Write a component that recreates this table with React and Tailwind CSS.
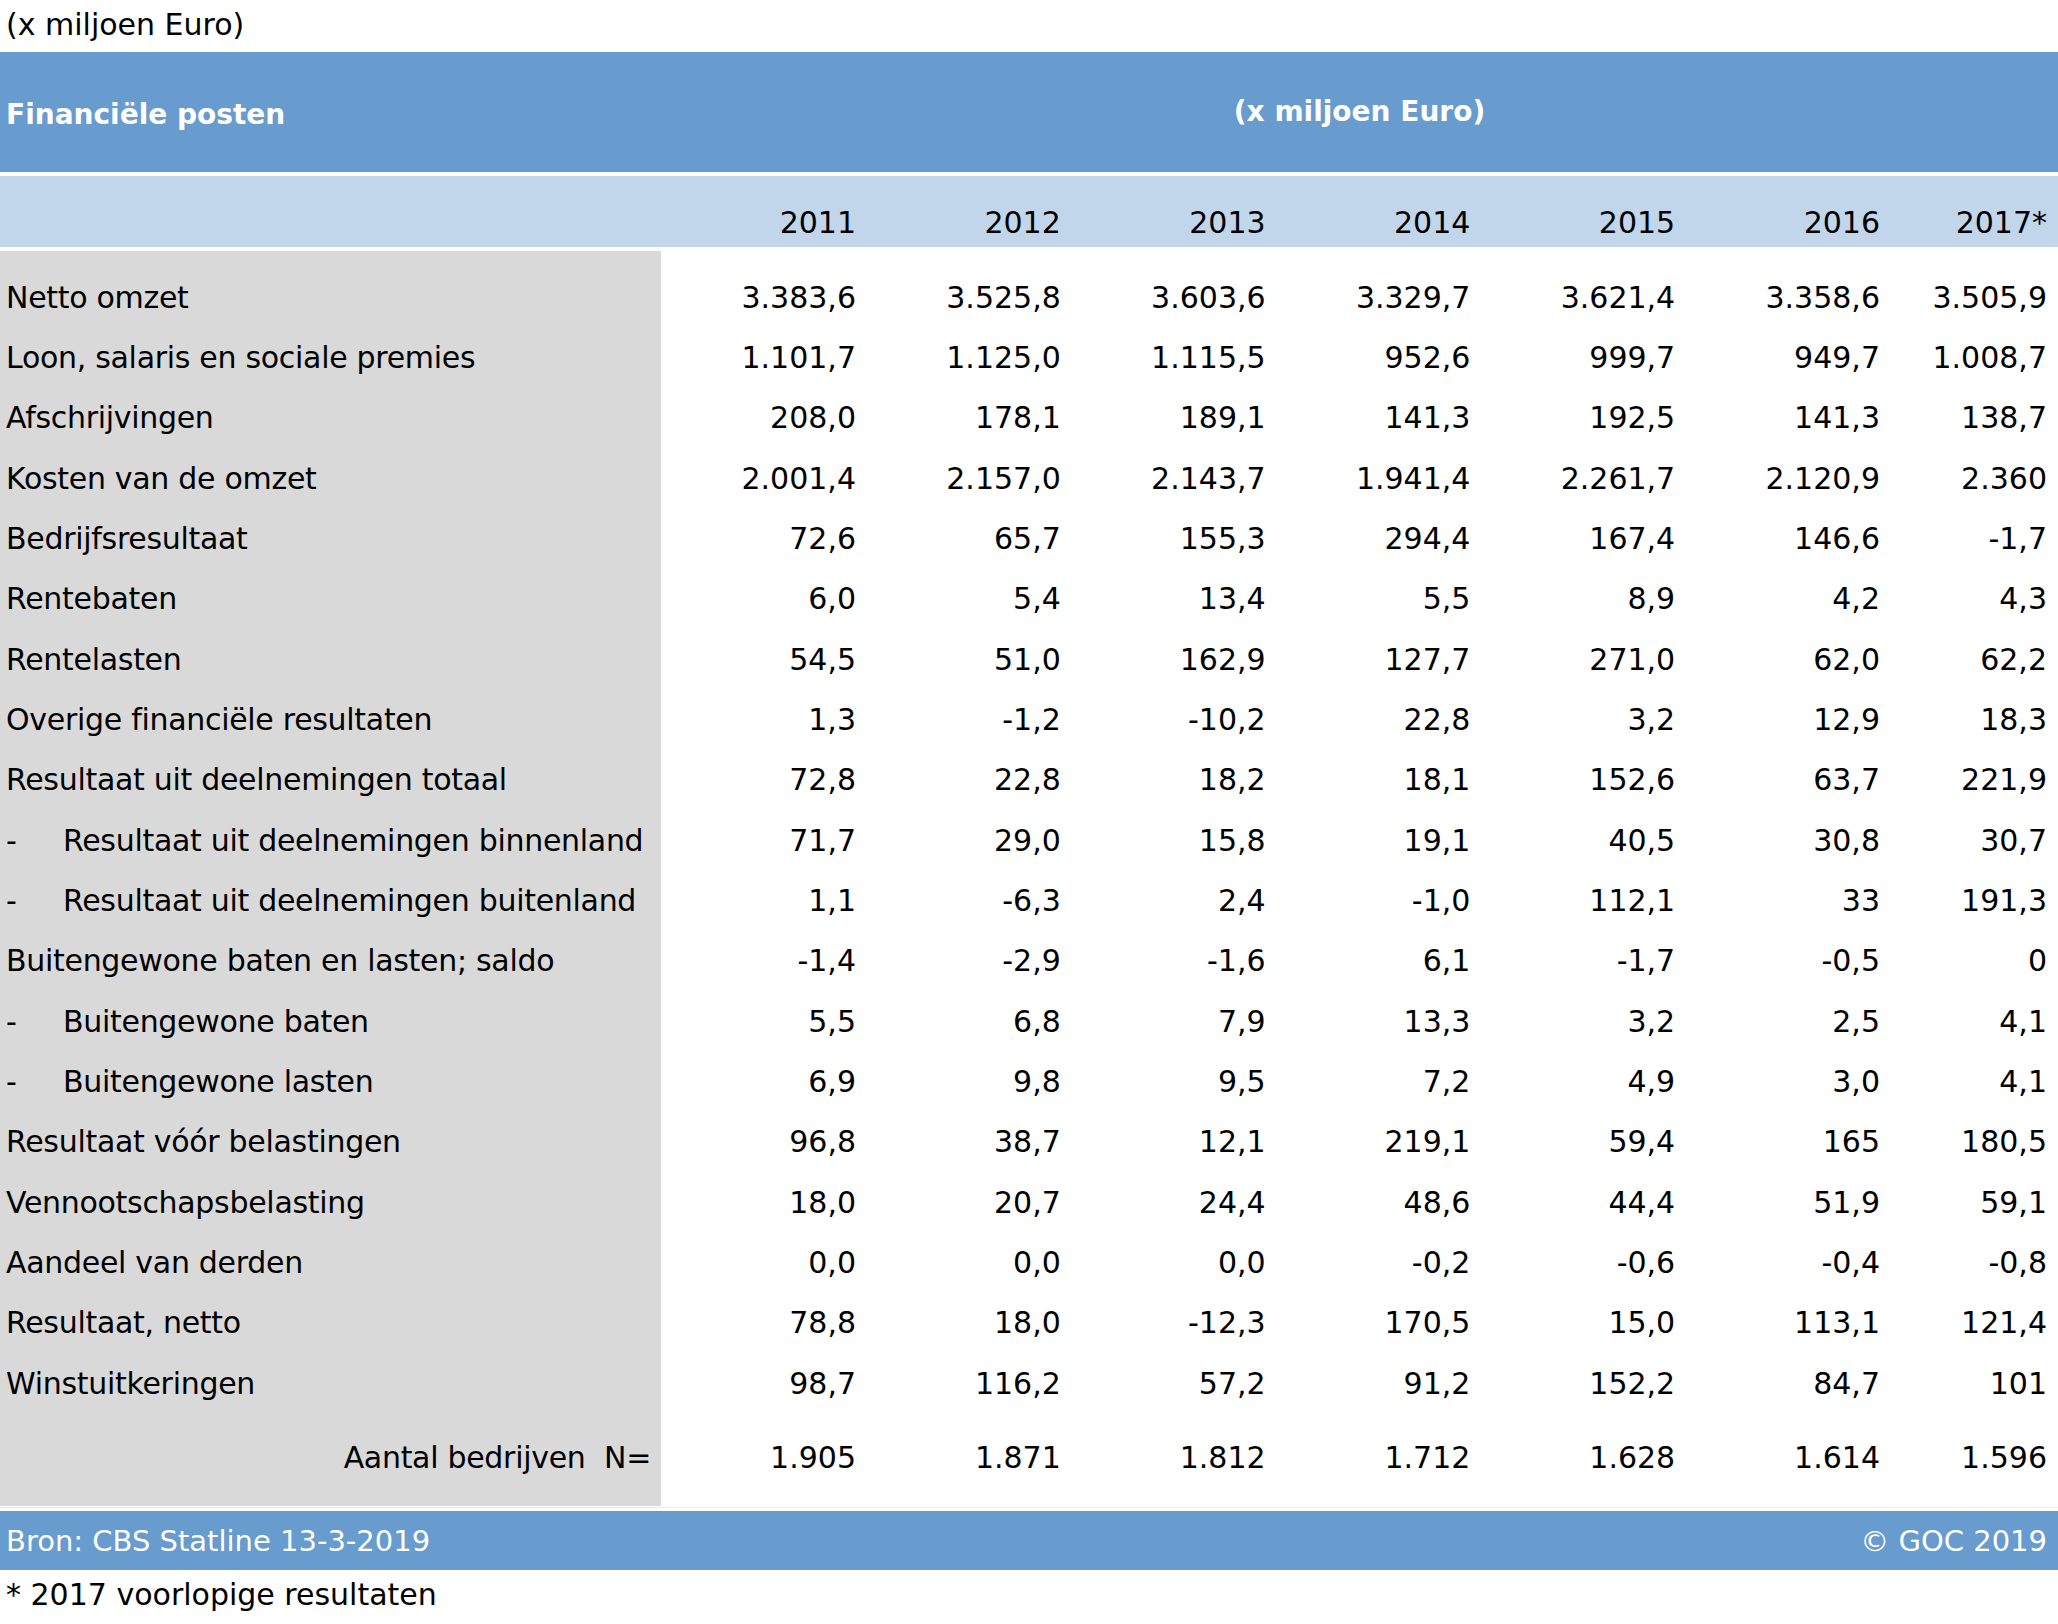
import React from "react";

const years = ["2011", "2012", "2013", "2014", "2015", "2016", "2017*"];

const rows = [
    { label: "Netto omzet", values: ["3.383,6", "3.525,8", "3.603,6", "3.329,7", "3.621,4", "3.358,6", "3.505,9"] },
    { label: "Loon, salaris en sociale premies", values: ["1.101,7", "1.125,0", "1.115,5", "952,6", "999,7", "949,7", "1.008,7"] },
    { label: "Afschrijvingen", values: ["208,0", "178,1", "189,1", "141,3", "192,5", "141,3", "138,7"] },
    { label: "Kosten van de omzet", values: ["2.001,4", "2.157,0", "2.143,7", "1.941,4", "2.261,7", "2.120,9", "2.360"] },
    { label: "Bedrijfsresultaat", values: ["72,6", "65,7", "155,3", "294,4", "167,4", "146,6", "-1,7"] },
    { label: "Rentebaten", values: ["6,0", "5,4", "13,4", "5,5", "8,9", "4,2", "4,3"] },
    { label: "Rentelasten", values: ["54,5", "51,0", "162,9", "127,7", "271,0", "62,0", "62,2"] },
    { label: "Overige financiële resultaten", values: ["1,3", "-1,2", "-10,2", "22,8", "3,2", "12,9", "18,3"] },
    { label: "Resultaat uit deelnemingen totaal", values: ["72,8", "22,8", "18,2", "18,1", "152,6", "63,7", "221,9"] },
    { label: "Resultaat uit deelnemingen binnenland", sub: true, values: ["71,7", "29,0", "15,8", "19,1", "40,5", "30,8", "30,7"] },
    { label: "Resultaat uit deelnemingen buitenland", sub: true, values: ["1,1", "-6,3", "2,4", "-1,0", "112,1", "33", "191,3"] },
    { label: "Buitengewone baten en lasten; saldo", values: ["-1,4", "-2,9", "-1,6", "6,1", "-1,7", "-0,5", "0"] },
    { label: "Buitengewone baten", sub: true, values: ["5,5", "6,8", "7,9", "13,3", "3,2", "2,5", "4,1"] },
    { label: "Buitengewone lasten", sub: true, values: ["6,9", "9,8", "9,5", "7,2", "4,9", "3,0", "4,1"] },
    { label: "Resultaat vóór belastingen", values: ["96,8", "38,7", "12,1", "219,1", "59,4", "165", "180,5"] },
    { label: "Vennootschapsbelasting", values: ["18,0", "20,7", "24,4", "48,6", "44,4", "51,9", "59,1"] },
    { label: "Aandeel van derden", values: ["0,0", "0,0", "0,0", "-0,2", "-0,6", "-0,4", "-0,8"] },
    { label: "Resultaat, netto", values: ["78,8", "18,0", "-12,3", "170,5", "15,0", "113,1", "121,4"] },
    { label: "Winstuitkeringen", values: ["98,7", "116,2", "57,2", "91,2", "152,2", "84,7", "101"] },
];

const aantal = ["1.905", "1.871", "1.812", "1.712", "1.628", "1.614", "1.596"];

// kolommen: label | 2011 | 2012..2016 | 2017
const cols = "grid grid-cols-[661px_195px_repeat(5,204.8px)_167px] pr-[11px]";

export default function App() {
    return (
        <div className="w-[2058px] h-[1624px] overflow-hidden bg-white text-black font-['DejaVu_Sans',sans-serif] text-[30px] leading-[36px]">
            {/* bijschrift */}
            <div className="h-[52px] pt-[7px] pl-[6px]">(x miljoen Euro)</div>

            {/* kop */}
            <div className="h-[120px] bg-[#689bce] text-white font-bold text-[28px] flex">
                <div className="w-[661px] pl-[6px] pt-[45px]">Financiële posten</div>
                <div className="flex-1 text-center pt-[42px]">(x miljoen Euro)</div>
            </div>

            {/* jaren */}
            <div className={`${cols} h-[71px] mt-[4px] bg-[#c1d6eb] pt-[29px]`}>
                <div />
                {years.map((y) => (
                    <div key={y} className="text-right">
                        {y}
                    </div>
                ))}
            </div>

            {/* tabel */}
            <div className="mt-[4px]">
                <div className={`${cols} h-[16.5px]`}>
                    <div className="bg-[#d9d9d9]" />
                </div>
                {rows.map((row) => (
                    <div key={row.label} className={`${cols} h-[60.33px] items-center`}>
                        <div className="bg-[#d9d9d9] h-full flex items-center pl-[6px] tracking-[-0.3px]">
                            {row.sub ? (
                                <>
                                    <span className="w-[57px]">-</span>
                                    <span>{row.label}</span>
                                </>
                            ) : (
                                <span>{row.label}</span>
                            )}
                        </div>
                        {row.values.map((v, i) => (
                            <div key={i} className="text-right">
                                {v}
                            </div>
                        ))}
                    </div>
                ))}
                <div className={`${cols} h-[92px]`}>
                    <div className="bg-[#d9d9d9] h-full text-right pr-[10px] pt-[26px] whitespace-pre tracking-[-0.3px]">
                        Aantal bedrijven  N=
                    </div>
                    {aantal.map((v, i) => (
                        <div key={i} className="text-right pt-[26px]">
                            {v}
                        </div>
                    ))}
                </div>
            </div>

            <div className="h-[5px] pt-[1px]">
                <div className="h-[1px] bg-[#e4ebf3]" />
            </div>

            {/* voet */}
            <div className="h-[59px] bg-[#689bce] text-white text-[29px] flex justify-between pl-[6px] pr-[11px] pt-[12px]">
                <span>Bron: CBS Statline 13-3-2019</span>
                <span>© GOC 2019</span>
            </div>
            <div className="pt-[7px] pl-[6px]">* 2017 voorlopige resultaten</div>
        </div>
    );
}
